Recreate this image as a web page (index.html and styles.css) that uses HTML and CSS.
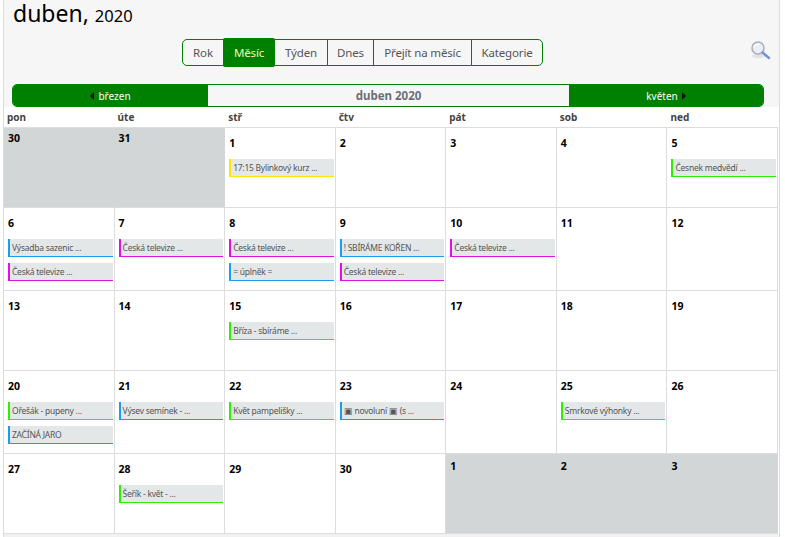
FILE: index.html
```html
<!DOCTYPE html>
<html lang="cs">
<head>
<meta charset="utf-8">
<title>duben 2020</title>
<link rel="stylesheet" href="styles.css">
</head>
<body>
<div class="page">
  <header class="head">
    <h1 class="title">duben, <small class="title-year">2020</small></h1>
    <div class="toolbar">
      <nav class="views">
        <a class="view view-first">Rok</a>
        <a class="view view-active">Měsíc</a>
        <a class="view">Týden</a>
        <a class="view">Dnes</a>
        <a class="view">Přejít na měsíc</a>
        <a class="view view-last">Kategorie</a>
      </nav>
      <svg class="search" width="22" height="22" viewBox="0 0 22 22" aria-hidden="true">
        <ellipse cx="7.5" cy="16" rx="6.5" ry="2.2" fill="#e2e2e2"/>
        <circle cx="7" cy="8" r="6" fill="#e8eefa" stroke="#a9aeb5" stroke-width="1.5"/>
        <path d="M3 7a4.5 4 0 0 1 6-2.5" fill="none" stroke="#fff" stroke-width="1.4"/>
        <path d="M11.5 12.5l6.5 5.5" stroke="#7392da" stroke-width="2.4" stroke-linecap="round"/>
      </svg>
    </div>
    <div class="monthbar">
      <a class="month-link"><span class="arrow arrow-left"></span>březen</a>
      <span class="month-current">duben 2020</span>
      <a class="month-link">květen<span class="arrow arrow-right"></span></a>
    </div>
  </header>
  <main class="calendar">
    <div class="weekdays">
      <span class="weekday">pon</span><span class="weekday">úte</span><span class="weekday">stř</span><span class="weekday">čtv</span><span class="weekday">pát</span><span class="weekday">sob</span><span class="weekday">ned</span>
    </div>
    <div class="month">
      <div class="day other first"><b class="num">30</b></div>
      <div class="day other first"><b class="num">31</b></div>
      <div class="day"><b class="num">1</b><a class="event yellow">17:15 Bylinkový kurz ...</a></div>
      <div class="day"><b class="num">2</b></div>
      <div class="day"><b class="num">3</b></div>
      <div class="day"><b class="num">4</b></div>
      <div class="day"><b class="num">5</b><a class="event green">Česnek medvědí ...</a></div>

      <div class="day"><b class="num">6</b><a class="event blue">Výsadba sazenic ...</a><a class="event magenta">Česká televize ...</a></div>
      <div class="day"><b class="num">7</b><a class="event magenta">Česká televize ...</a></div>
      <div class="day"><b class="num">8</b><a class="event magenta">Česká televize ...</a><a class="event blue">= úplněk =</a></div>
      <div class="day"><b class="num">9</b><a class="event blue">! SBÍRÁME KOŘEN ...</a><a class="event magenta">Česká televize ...</a></div>
      <div class="day"><b class="num">10</b><a class="event magenta">Česká televize ...</a></div>
      <div class="day"><b class="num">11</b></div>
      <div class="day"><b class="num">12</b></div>

      <div class="day"><b class="num">13</b></div>
      <div class="day"><b class="num">14</b></div>
      <div class="day"><b class="num">15</b><a class="event green">Bříza - sbíráme ...</a></div>
      <div class="day"><b class="num">16</b></div>
      <div class="day"><b class="num">17</b></div>
      <div class="day"><b class="num">18</b></div>
      <div class="day"><b class="num">19</b></div>

      <div class="day"><b class="num">20</b><a class="event green">Ořešák - pupeny ...</a><a class="event blue">ZAČÍNÁ JARO</a></div>
      <div class="day"><b class="num">21</b><a class="event blue">Výsev semínek - ...</a></div>
      <div class="day"><b class="num">22</b><a class="event green">Květ pampelišky ...</a></div>
      <div class="day"><b class="num">23</b><a class="event blue">▣ novoluní ▣ (s ...</a></div>
      <div class="day"><b class="num">24</b></div>
      <div class="day"><b class="num">25</b><a class="event green">Smrkové výhonky ...</a></div>
      <div class="day"><b class="num">26</b></div>

      <div class="day"><b class="num">27</b></div>
      <div class="day"><b class="num">28</b><a class="event green">Šeřík - květ - ...</a></div>
      <div class="day"><b class="num">29</b></div>
      <div class="day"><b class="num">30</b></div>
      <div class="day other last"><b class="num">1</b></div>
      <div class="day other last"><b class="num">2</b></div>
      <div class="day other last"><b class="num">3</b></div>
    </div>
  </main>
</div>
</body>
</html>
```
FILE: styles.css
```css
* { box-sizing: border-box; }
html, body { margin: 0; background: #fff; }
body { font-family: "Noto Sans", "Open Sans", sans-serif; color: #555; }

.page {
  width: 777px;
  height: 537px;
  margin-left: 3px;
  border-left: 1px solid #ddd;
  border-right: 1px solid #ddd;
  background: #f1f1f1;
}

.head { background: #f6f6f6; height: 107px; }
.title {
  margin: 0 0 12px;
  padding: 0 0 0 9px;
  font-size: 23px;
  font-weight: 400;
  line-height: 27px;
  color: #000;
}
.title-year { font-size: 16.5px; line-height: 1; }

.toolbar { display: flex; align-items: center; height: 27px; padding-left: 178px; }
.views {
  display: flex;
  height: 27px;
  border: 1px solid #008000;
  border-radius: 5px;
}
.view {
  display: flex;
  align-items: center;
  justify-content: center;
  width: 52px;
  font-size: 11.5px;
  letter-spacing: -0.15px;
  color: #555;
  border-left: 1px solid #008000;
}
.view:nth-child(1) { width: 40px; }
.view:nth-child(4) { width: 46px; }
.view:nth-child(5) { width: 98px; }
.view:nth-child(6) { width: 71px; }
.view-first, .view-active, .view-active + .view { border-left: 0; }
.view-active {
  margin: -2px 0;
  background: #008000;
  color: #f5f5b0;
  border-radius: 2px;
}
.search { margin-left: 208px; margin-top: -3px; }

.monthbar {
  display: grid;
  grid-template-columns: 195px 1fr 194px;
  align-items: stretch;
  height: 23px;
  margin: 18px 15px 0 8px;
  border: 1px solid #008000;
  border-radius: 5px;
  overflow: hidden;
}
.month-link {
  display: flex;
  align-items: center;
  justify-content: center;
  gap: 4px;
  background: #008000;
  color: #fff;
  font-size: 10px;
}
.month-current {
  display: flex;
  align-items: center;
  justify-content: center;
  font-size: 11.5px;
  font-weight: 700;
  color: #6b7077;
}
.arrow { width: 0; height: 0; border-top: 4px solid transparent; border-bottom: 4px solid transparent; }
.arrow-left { border-right: 4px solid #111; }
.arrow-right { border-left: 4px solid #111; }

.calendar { background: #fff; width: 775px; }
.weekdays {
  display: grid;
  grid-template-columns: repeat(7, 1fr);
  height: 20px;
  width: 774px;
}
.weekday {
  padding-left: 3px;
  font-size: 10px;
  font-weight: 700;
  line-height: 20px;
  color: #444;
}

.month {
  display: grid;
  grid-template-columns: repeat(7, 1fr);
  width: 774px;
  border-top: 1px solid #ddd;
}
.day {
  display: flex;
  flex-direction: column;
  gap: 6px;
  min-height: 80px;
  padding: 8px 1px 9px 4px;
  background: #fff;
  border-right: 1px solid #ddd;
  border-bottom: 1px solid #ddd;
}
.num {
  display: block;
  height: 15px;
  margin-bottom: 2px;
  font-size: 10.5px;
  line-height: 15px;
  color: #000;
}
.other { background: #d3d6d7; border-right-color: #d3d6d7; }
.other.first { padding-top: 3px; }
.other.last { padding-top: 5px; }

.event {
  display: block;
  height: 18px;
  padding-left: 2px;
  overflow: hidden;
  white-space: nowrap;
  background: #e4e7e8;
  border-left: 2px solid;
  border-bottom: 1px solid;
  font-size: 8.5px;
  letter-spacing: -0.25px;
  line-height: 17px;
  color: #555;
}
.yellow { border-color: #ffe600; }
.green { border-color: #2df000; }
.blue { border-color: #1a9cf0; }
.magenta { border-color: #e010e0; }
```
